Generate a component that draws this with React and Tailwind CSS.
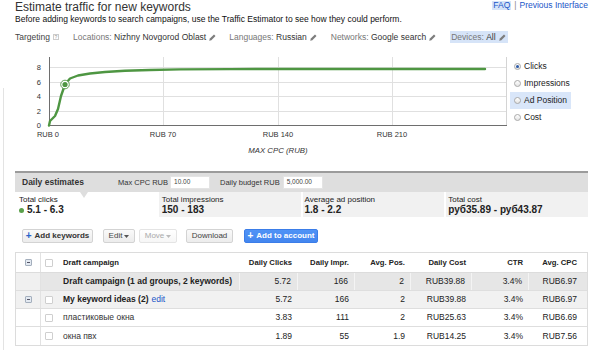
import React from "react";

const Pencil = () => (
  <svg width="7" height="7" viewBox="0 0 10 10" className="inline-block ml-[3px] shrink-0">
    <path d="M0.3 9.7 L1.2 6.6 L7.1 0.7 L9.3 2.9 L3.4 8.8 Z" fill="#7d7d7d" />
  </svg>
);

const Radio = ({ checked }) => (
  <span className="relative inline-flex items-center justify-center w-[7px] h-[7px] rounded-full border border-[#a9a9a9] bg-gradient-to-b from-white to-[#e4e4e4] shrink-0">
    {checked && <span className="w-[3px] h-[3px] rounded-full bg-[#2c5aa8]" />}
  </span>
);

const Checkbox = () => (
  <span className="inline-block w-[8px] h-[8px] border border-[#cfcfcf] bg-white rounded-[1px]" />
);

const MinusBox = () => (
  <span className="inline-flex items-center justify-center w-[7px] h-[7px] border border-[#a4afbd] bg-[#e3e9f1] rounded-[1px]">
    <span className="w-[3px] h-px bg-[#556]" />
  </span>
);

const pts = [
  [49, 71.5], [50, 67], [52, 65], [55, 62], [58, 55], [61, 42], [65, 30.5], [70, 24.5], [78, 21.5],
  [90, 19.5], [105, 18], [125, 16.8], [150, 16], [180, 15.4], [230, 15.1], [300, 15], [485, 15],
];

const Chart = () => (
  <svg width="508" height="105" viewBox="0 0 508 105" className="block shrink-0" style={{ fontFamily: "'Liberation Sans', Arial, sans-serif" }}>
    {[13.5, 28.5, 42.5, 57.5].map((y) => (
      <line key={y} x1="49" x2="507" y1={y} y2={y} stroke="#e0e0e0" strokeWidth="1" />
    ))}
    {[163.5, 278.5, 392.5].map((x) => (
      <line key={x} x1={x} x2={x} y1="3" y2="71" stroke="#e0e0e0" strokeWidth="1" />
    ))}
    <line x1="506.5" x2="506.5" y1="3" y2="71" stroke="#d4d4d4" strokeWidth="1" />
    <line x1="49.5" x2="49.5" y1="3" y2="72" stroke="#6e6e6e" strokeWidth="1" />
    <line x1="49" x2="507" y1="71.5" y2="71.5" stroke="#6e6e6e" strokeWidth="1" />
    {[["8", 13.5], ["6", 28.5], ["4", 42.5], ["2", 57], ["0", 71]].map(([t, y]) => (
      <text key={t} x="41" y={y + 2.8} textAnchor="end" fontSize="7.5" fill="#333">{t}</text>
    ))}
    {[["RUB 0", 48], ["RUB 70", 163], ["RUB 140", 278], ["RUB 210", 392]].map(([t, x]) => (
      <text key={t} x={x} y="82.7" textAnchor="middle" fontSize="7.5" fill="#333">{t}</text>
    ))}
    <text x="278" y="98.8" textAnchor="middle" fontSize="7.8" fontStyle="italic" fill="#333">MAX CPC (RUB)</text>
    <polyline
      points={pts.map((p) => p.join(",")).join(" ")}
      fill="none"
      stroke="#4e9642"
      strokeWidth="2.4"
      strokeLinejoin="round"
      strokeLinecap="round"
    />
    <circle cx="65" cy="30.5" r="4.3" fill="white" stroke="#4e9642" strokeWidth="0.9" />
    <circle cx="65" cy="30.5" r="2.6" fill="#4e9642" />
  </svg>
);

const Legend = () => {
  const items = [
    { t: "Clicks", c: true },
    { t: "Impressions" },
    { t: "Ad Position", h: true },
    { t: "Cost" },
  ];
  return (
    <div className="flex flex-col pt-[4px] ml-[2px]">
      {items.map((it) => (
        <div
          key={it.t}
          className={`flex items-center h-[17px] w-[61px] pl-[4px] gap-[3px] ${it.h ? "bg-[#d9e6f9]" : ""}`}
        >
          <Radio checked={it.c} />
          <span className="text-[8.5px] text-[#222] leading-none">{it.t}</span>
        </div>
      ))}
    </div>
  );
};

const Btn = ({ children, w, cls = "" }) => (
  <div
    className={`flex items-center justify-center h-[14px] ${w} border border-[#d3d3d3] rounded-[2px] bg-gradient-to-b from-[#fafafa] to-[#ececec] text-[8px] leading-none ${cls}`}
  >
    {children}
  </div>
);

const Caret = ({ color = "#555" }) => (
  <svg width="5" height="3" viewBox="0 0 5 3" className="ml-[2px]">
    <path d="M0 0 H5 L2.5 3 Z" fill={color} />
  </svg>
);

const rows = [
  {
    name: "Draft campaign (1 ad groups, 2 keywords)",
    bold: true,
    kind: "campaign",
    vals: ["5.72", "166", "2", "RUB39.88", "3.4%", "RUB6.97"],
  },
  {
    name: "My keyword ideas (2)",
    bold: true,
    kind: "group",
    vals: ["5.72", "166", "2", "RUB39.88", "3.4%", "RUB6.97"],
  },
  { name: "пластиковые окна", kind: "kw", vals: ["3.83", "111", "2", "RUB25.63", "3.4%", "RUB6.69"] },
  { name: "окна пвх", kind: "kw", vals: ["1.89", "55", "1.9", "RUB14.25", "3.4%", "RUB7.56"] },
];

const grid = "grid grid-cols-[25px_17px_1fr_58px_57px_56px_61px_57px_58px]";

export default function App() {
  return (
    <div className="relative w-[592px] h-[350px] overflow-hidden bg-white text-[#222] font-['Liberation_Sans',Arial,sans-serif]">
      <div className="absolute left-[3px] top-[88px] bottom-0 w-px bg-[#e3e3e3]" />

      <div className="px-[15px] pr-[4px]">
        {/* Title row */}
        <div className="flex justify-between items-start h-[14px]">
          <div className="text-[12px] leading-[14px] text-[#333]">Estimate traffic for new keywords</div>
          <div className="flex items-center text-[8.5px] leading-[9px] mt-[1px] text-[#1a55c8]">
            <span className="bg-[#d6e4f8] px-px">FAQ</span>
            <span className="text-[#888] mx-[3px]">|</span>
            <span>Previous Interface</span>
          </div>
        </div>
        {/* subtitle */}
        <div className="text-[8.5px] leading-[10px] text-[#111]">
          Before adding keywords to search campaigns, use the Traffic Estimator to see how they could perform.
        </div>
        {/* targeting */}
        <div className="flex items-center h-[12px] mt-[7px] gap-[14px] text-[8.5px] leading-none">
          <div className="flex items-center text-[#444]">
            Targeting
            <span className="ml-[3px] inline-flex items-center justify-center w-[6px] h-[6px] border border-[#ccc] text-[5px] text-[#999] leading-none">?</span>
          </div>
          <div className="flex items-center">
            <span className="text-[#777]">Locations:&nbsp;</span>
            <span className="text-[#333]">Nizhny Novgorod Oblast</span>
            <Pencil />
          </div>
          <div className="flex items-center -ml-px">
            <span className="text-[#777]">Languages:&nbsp;</span>
            <span className="text-[#333]">Russian</span>
            <Pencil />
          </div>
          <div className="flex items-center">
            <span className="text-[#777]">Networks:&nbsp;</span>
            <span className="text-[#333]">Google search</span>
            <Pencil />
          </div>
          <div className="flex items-center bg-[#d6e4f8] h-[12px] px-px pr-[2px]">
            <span className="text-[#777]">Devices:&nbsp;</span>
            <span className="text-[#333]">All</span>
            <Pencil />
          </div>
        </div>
      </div>

      {/* Chart */}
      <div className="flex mt-[11px]">
        <Chart />
        <Legend />
      </div>

      <div className="px-[15px] pr-[4px]">
        {/* Daily estimates */}
        <div className="mt-[12px] border-t-[2px] border-[#9b9b9b]">
          <div className="flex items-center h-[19px] bg-[#dedede] text-[7.5px] leading-none">
            <div className="w-[103px] pl-[7px] text-[8.5px] font-bold text-[#333]">Daily estimates</div>
            <span className="text-[#333]">Max CPC RUB</span>
            <div className="ml-[2px] w-[40px] h-[13px] bg-white border border-[#e4e4e4] flex items-center pl-[3px] text-[6.5px] text-[#444]">10.00</div>
            <span className="ml-[10px] text-[#333]">Daily budget RUB</span>
            <div className="ml-[3px] w-[40px] h-[13px] bg-white border border-[#e4e4e4] flex items-center pl-[3px] text-[6.5px] text-[#444]">5,000.00</div>
          </div>
          <div className="grid grid-cols-4 gap-[2px] bg-white h-[25px]">
            <div className="relative bg-white pl-[4px] pt-[3px]">
              <div className="absolute left-[65px] top-0 w-0 h-0 border-l-[4px] border-r-[4px] border-t-[6px] border-l-transparent border-r-transparent border-t-[#dedede]" />
              <div className="text-[8px] leading-[9px] text-[#222]">Total clicks</div>
              <div className="flex items-center text-[10px] leading-[12px] font-bold">
                <span className="w-[5px] h-[5px] rounded-full bg-[#5aa04a] mr-[3px]" />5.1 - 6.3
              </div>
            </div>
            <div className="bg-[#f1f1f1] pl-[3px] pt-[3px]">
              <div className="text-[8px] leading-[9px] text-[#222]">Total impressions</div>
              <div className="text-[10px] leading-[12px] font-bold">150 - 183</div>
            </div>
            <div className="bg-[#f1f1f1] pl-[2px] pt-[3px]">
              <div className="text-[8px] leading-[9px] text-[#222]">Average ad position</div>
              <div className="text-[10px] leading-[12px] font-bold">1.8 - 2.2</div>
            </div>
            <div className="bg-[#f1f1f1] pl-[2px] pt-[3px]">
              <div className="text-[8px] leading-[9px] text-[#222]">Total cost</div>
              <div className="text-[10px] leading-[12px] font-bold">руб35.89 - руб43.87</div>
            </div>
          </div>
        </div>

        {/* Buttons */}
        <div className="flex items-center mt-[12px] ml-[7px]">
          <Btn w="w-[71px]" cls="font-bold text-[#333]">
            <span className="text-[#2a62c9] text-[10px] mr-[3px] leading-none">+</span>Add keywords
          </Btn>
          <Btn w="w-[32px]" cls="ml-[10px] text-[#444]">
            Edit<Caret />
          </Btn>
          <Btn w="w-[38px]" cls="ml-[4px] text-[#aaa] from-white to-[#f6f6f6] border-[#e4e4e4]">
            Move<Caret color="#bbb" />
          </Btn>
          <Btn w="w-[47px]" cls="ml-[9px] text-[#444]">Download</Btn>
          <div className="ml-[11px] flex items-center justify-center w-[74px] h-[14px] rounded-[2px] border border-[#3b7de8] bg-gradient-to-b from-[#4f93f6] to-[#4386ef] text-white text-[8px] font-bold leading-none">
            <span className="text-[10px] mr-[3px] leading-none">+</span>Add to account
          </div>
        </div>

        {/* Table */}
        <div className="mt-[9px] border border-[#dcdcdc] text-[8.5px] leading-none">
          <div className={`${grid} h-[20px] border-b border-[#dcdcdc] items-stretch`}>
            <div className="flex items-center justify-center border-r border-[#e2e2e2]"><MinusBox /></div>
            <div className="flex items-center pl-[4px]"><Checkbox /></div>
            <div className="flex items-center pl-[5px] font-bold text-[7.7px]">Draft campaign</div>
            {["Daily Clicks", "Daily Impr.", "Avg. Pos.", "Daily Cost", "CTR", "Avg. CPC"].map((h, i) => (
              <div key={h} className={`flex items-center justify-end font-bold text-[7.7px] ${i === 5 ? "pr-[10px]" : "pr-[6px]"}`}>{h}</div>
            ))}
          </div>
          {rows.map((r, ri) => {
            const rowBg = r.kind === "campaign" ? "bg-[#e6e6e6]" : r.kind === "group" ? "bg-[#f1f1f1]" : "bg-white";
            const sep = r.kind === "campaign" ? "border-r border-[#f4f4f4]" : "";
            return (
              <div key={ri} className={`${grid} h-[18px] ${ri < rows.length - 1 ? "border-b border-[#dedede]" : ""} ${rowBg}`}>
                <div className={`flex items-center justify-center border-r border-[#e2e2e2] ${r.kind === "campaign" ? "bg-[#f0f0f0]" : ""}`}>
                  {r.kind === "group" && <MinusBox />}
                </div>
                <div className="flex items-center pl-[4px]">{r.kind !== "campaign" && <Checkbox />}</div>
                <div className={`flex items-center pl-[5px] ${r.bold ? "font-bold" : ""} ${sep} ${r.kind === "kw" ? "text-[#333]" : "text-[#222]"}`}>
                  {r.name}
                  {r.kind === "group" && <span className="ml-[3px] font-normal text-[#1a55c8]">edit</span>}
                </div>
                {r.vals.map((v, i) => (
                  <div key={i} className={`flex items-center justify-end ${i === 5 ? "pr-[10px]" : `pr-[6px] ${sep}`} text-[#222]`}>{v}</div>
                ))}
              </div>
            );
          })}
        </div>
      </div>
    </div>
  );
}
